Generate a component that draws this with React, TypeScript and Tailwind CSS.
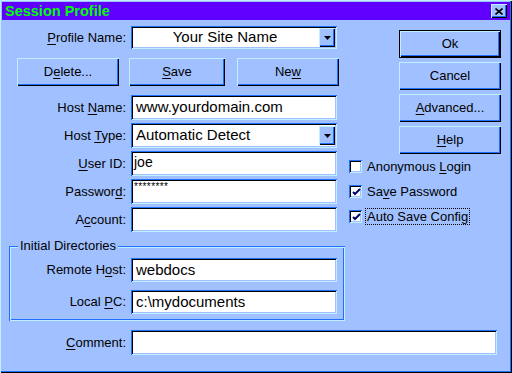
import React from "react";

const SUNKEN =
  "shadow-[inset_1px_1px_0_#2070ff,inset_-1px_-1px_0_#c0f0ff,inset_2px_2px_0_#000000,inset_-2px_-2px_0_#a0c0ff]";
const RAISED =
  "shadow-[inset_1px_1px_0_#c0f0ff,inset_-1px_-1px_0_#000000,inset_-2px_-2px_0_#2070ff]";

function U({ children }: { children: React.ReactNode }) {
  return <span className="underline decoration-1 underline-offset-[2px]">{children}</span>;
}

function Btn({
  children,
  className = "",
  def = false,
}: {
  children: React.ReactNode;
  className?: string;
  def?: boolean;
}) {
  return (
    <div
      className={
        "h-[28px] flex items-center justify-center text-[13px] text-black bg-[#a0c0ff] " +
        (def
          ? "shadow-[inset_0_0_0_1px_#000000,inset_2px_2px_0_#c0f0ff,inset_-2px_-2px_0_#000000,inset_-3px_-3px_0_#2070ff] "
          : RAISED + " ") +
        className
      }
    >
      <span>{children}</span>
    </div>
  );
}

function Label({ children, w = "w-[124px]" }: { children: React.ReactNode; w?: string }) {
  return <div className={w + " text-right text-[13px] text-black shrink-0"}>{children}</div>;
}

function DropBtn() {
  return (
    <div
      className={
        "w-[16px] h-[19px] mr-[2px] shrink-0 flex items-center justify-center bg-[#a0c0ff] " + RAISED
      }
    >
      <svg width="7" height="4" viewBox="0 0 7 4">
        <polygon points="0,0 7,0 3.5,4" fill="#000" />
      </svg>
    </div>
  );
}

function Check({ checked }: { checked: boolean }) {
  return (
    <div className={"w-[13px] h-[13px] bg-white shrink-0 flex items-center justify-center " + SUNKEN}>
      {checked && (
        <svg width="9" height="9" viewBox="0 0 9 9" className="ml-[1px] mt-[1px]">
          <path d="M1 4 L3 6 L8 1" stroke="#000070" strokeWidth="2" fill="none" />
        </svg>
      )}
    </div>
  );
}

export default function App() {
  return (
    <div className="w-[512px] h-[373px] bg-[#a0c0ff] relative font-['Liberation_Sans',Arial,sans-serif] shadow-[inset_1px_1px_0_#c0f0ff,inset_-1px_-1px_0_#000000,inset_-2px_-2px_0_#2070ff] overflow-hidden">
      {/* Title bar */}
      <div className="mx-[2px] mt-[2px] h-[18px] bg-[#6000ff] flex items-center justify-between">
        <div className="pl-[3px] text-[14.5px] font-bold text-[#00ff00] leading-none">Session Profile</div>
        <div className={"w-[16px] h-[14px] mr-[3px] bg-[#a0c0ff] flex items-center justify-center " + RAISED}>
          <svg width="8" height="7" viewBox="0 0 8 7">
            <path d="M0.5 0.5 L7.5 6.5 M7.5 0.5 L0.5 6.5" stroke="#000" strokeWidth="1.6" />
          </svg>
        </div>
      </div>

      {/* Body */}
      <div className="pl-[2px] flex flex-col">
        <div className="flex">
          {/* Left column */}
          <div className="w-[343px] flex flex-col">
            <div className="mt-[6px] flex items-center h-[23px]">
              <Label>
                <U>P</U>rofile Name:
              </Label>
              <div className={"ml-[5px] w-[206px] h-[23px] bg-white flex items-center " + SUNKEN}>
                <div className="flex-1 text-center text-[15px] text-black">Your Site Name</div>
                <DropBtn />
              </div>
            </div>

            <div className="mt-[9px] flex h-[28px]">
              <Btn className="ml-[15px] w-[102px]">
                D<U>e</U>lete...
              </Btn>
              <Btn className="ml-[10px] w-[96px]">
                <U>S</U>ave
              </Btn>
              <Btn className="ml-[12px] w-[102px]">
                Ne<U>w</U>
              </Btn>
            </div>

            <div className="mt-[9px] flex items-center h-[25px]">
              <Label>
                Host <U>N</U>ame:
              </Label>
              <div className={"ml-[5px] w-[206px] h-[25px] bg-white flex items-center pl-[5px] text-[15px] text-black " + SUNKEN}>
                www.yourdomain.com
              </div>
            </div>

            <div className="mt-[3px] flex items-center h-[25px]">
              <Label>
                Host <U>T</U>ype:
              </Label>
              <div className={"ml-[5px] w-[206px] h-[25px] bg-white flex items-center " + SUNKEN}>
                <div className="flex-1 pl-[5px] text-[15px] text-black">Automatic Detect</div>
                <DropBtn />
              </div>
            </div>

            <div className="mt-[3px] flex items-center h-[25px]">
              <Label>
                <U>U</U>ser ID:
              </Label>
              <div className={"ml-[5px] w-[206px] h-[25px] bg-white pl-[3px] pt-[2px] text-[14px] leading-[18px] text-black " + SUNKEN}>
                joe
              </div>
            </div>

            <div className="mt-[3px] flex items-center h-[25px]">
              <Label>
                Passwor<U>d</U>:
              </Label>
              <div className={"ml-[5px] w-[206px] h-[25px] bg-white pl-[3px] pt-[3px] text-[10px] leading-[10px] tracking-[0.4px] text-black " + SUNKEN}>
                ********
              </div>
            </div>

            <div className="mt-[3px] flex items-center h-[25px]">
              <Label>
                A<U>c</U>count:
              </Label>
              <div className={"ml-[5px] w-[206px] h-[25px] bg-white " + SUNKEN}></div>
            </div>

            {/* Group box */}
            <div className="relative mt-[14px] ml-[7px] w-[336px] h-[75px] shadow-[inset_1px_1px_0_#2070ff,inset_-1px_-1px_0_#c0f0ff,inset_2px_2px_0_#c0f0ff,inset_-2px_-2px_0_#2070ff] flex flex-col">
              <div className="absolute top-[-8px] left-[9px] px-[2px] bg-[#a0c0ff] text-[13px] leading-[16px] text-black">
                Initial Directories
              </div>
              <div className="mt-[12px] flex items-center h-[24px]">
                <Label w="w-[117px]">
                  Remote H<U>o</U>st:
                </Label>
                <div className={"ml-[5px] w-[206px] h-[24px] bg-white flex items-center pl-[5px] text-[15px] text-black " + SUNKEN}>
                  webdocs
                </div>
              </div>
              <div className="mt-[8px] flex items-center h-[24px]">
                <Label w="w-[117px]">
                  Local <U>P</U>C:
                </Label>
                <div className={"ml-[5px] w-[206px] h-[24px] bg-white flex items-center pl-[5px] text-[15px] text-black " + SUNKEN}>
                  c:\mydocuments
                </div>
              </div>
            </div>
          </div>

          {/* Right column */}
          <div className="flex flex-col">
            <Btn def className="ml-[54px] mt-[10px] w-[102px]">
              Ok
            </Btn>
            <Btn className="ml-[54px] mt-[4px] w-[102px]">Cancel</Btn>
            <Btn className="ml-[54px] mt-[4px] w-[102px]">
              <U>A</U>dvanced...
            </Btn>
            <Btn className="ml-[54px] mt-[4px] w-[102px]">
              <U>H</U>elp
            </Btn>

            <div className="ml-[4px] mt-[6px] h-[13px] flex items-center">
              <Check checked={false} />
              <span className="ml-[5px] text-[13px] text-black whitespace-nowrap">
                Anonymous <U>L</U>ogin
              </span>
            </div>
            <div className="ml-[4px] mt-[12px] h-[13px] flex items-center">
              <Check checked />
              <span className="ml-[5px] text-[13px] text-black whitespace-nowrap">
                Sa<U>v</U>e Password
              </span>
            </div>
            <div className="ml-[4px] mt-[12px] h-[13px] flex items-center">
              <Check checked />
              <span className="ml-[4px] px-[1px] text-[13px] leading-[15px] text-black whitespace-nowrap outline outline-1 outline-dotted outline-black">
                Auto Save Config
              </span>
            </div>
          </div>
        </div>

        {/* Comment */}
        <div className="mt-[9px] flex items-center h-[25px]">
          <Label>
            <U>C</U>omment:
          </Label>
          <div className={"ml-[5px] w-[366px] h-[25px] bg-white " + SUNKEN}></div>
        </div>
      </div>
    </div>
  );
}
